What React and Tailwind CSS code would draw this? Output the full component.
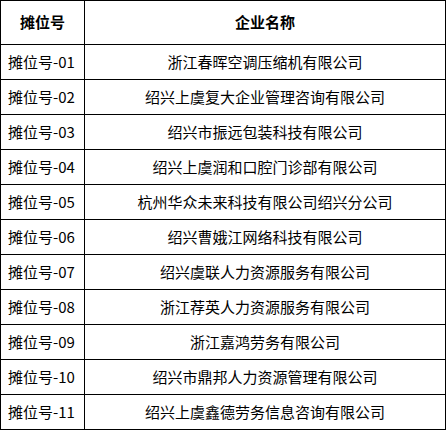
import React from 'react';

const rows = [
  ['摊位号-01', '浙江春晖空调压缩机有限公司'],
  ['摊位号-02', '绍兴上虞复大企业管理咨询有限公司'],
  ['摊位号-03', '绍兴市振远包装科技有限公司'],
  ['摊位号-04', '绍兴上虞润和口腔门诊部有限公司'],
  ['摊位号-05', '杭州华众未来科技有限公司绍兴分公司'],
  ['摊位号-06', '绍兴曹娥江网络科技有限公司'],
  ['摊位号-07', '绍兴虞联人力资源服务有限公司'],
  ['摊位号-08', '浙江荐英人力资源服务有限公司'],
  ['摊位号-09', '浙江嘉鸿劳务有限公司'],
  ['摊位号-10', '绍兴市鼎邦人力资源管理有限公司'],
  ['摊位号-11', '绍兴上虞鑫德劳务信息咨询有限公司'],
];

const App = () => {
  return (
    <div
      className="w-[446px] h-[430px] bg-white text-black text-[15px]"
      style={{ fontFamily: '"Microsoft YaHei", "Noto Sans CJK SC", sans-serif' }}
    >
      <div className="grid grid-cols-[84px_361px] border-l border-t border-black">
        <div className="h-[44px] flex items-center justify-center font-bold border-r border-b border-black">
          摊位号
        </div>
        <div className="h-[44px] flex items-center justify-center font-bold border-r border-b border-black">
          企业名称
        </div>
        {rows.map(([booth, name]) => (
          <React.Fragment key={booth}>
            <div className="h-[35px] flex items-center pl-[7px] border-r border-b border-black">
              {booth}
            </div>
            <div className="h-[35px] flex items-center justify-center border-r border-b border-black">
              {name}
            </div>
          </React.Fragment>
        ))}
      </div>
    </div>
  );
};

export default App;
